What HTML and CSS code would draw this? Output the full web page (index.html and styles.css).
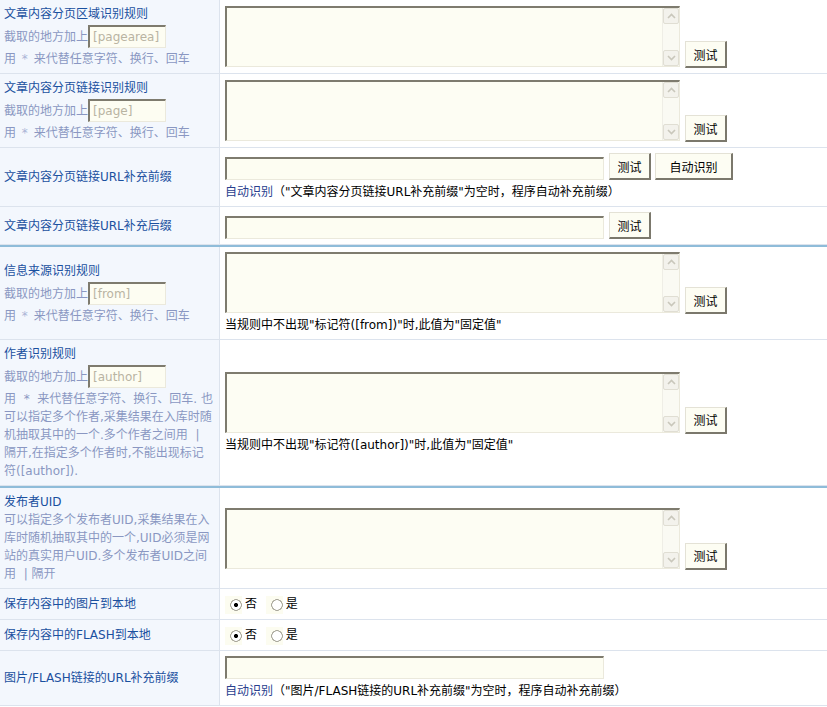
FILE: index.html
```html
<!DOCTYPE html>
<html>
<head>
<meta charset="utf-8">
<title>采集规则设置</title>
<link rel="stylesheet" href="styles.css">
</head>
<body>

<table class="form-table">
  <!-- 分页区域 -->
  <tr>
    <td class="label">
      <div class="title">文章内容分页区域识别规则</div>
      <div class="tip">截取的地方加上<input class="tag" value="[pagearea]" readonly></div>
      <div class="tip">用 <span class="star">*</span> 来代替任意字符、换行、回车</div>
    </td>
    <td class="field">
      <div class="area-row">
        <div class="area">
          <textarea></textarea>
          <div class="scroll">
            <span class="arrow"><svg width="9" height="6" viewBox="0 0 9 6"><path d="M1 5 L4.5 1.5 L8 5" fill="none" stroke="#c9c7bb" stroke-width="1.6"/></svg></span>
            <span class="arrow"><svg width="9" height="6" viewBox="0 0 9 6"><path d="M1 1 L4.5 4.5 L8 1" fill="none" stroke="#c9c7bb" stroke-width="1.6"/></svg></span>
          </div>
        </div>
        <button class="btn">测试</button>
      </div>
    </td>
  </tr>

  <!-- 分页链接 -->
  <tr>
    <td class="label">
      <div class="title">文章内容分页链接识别规则</div>
      <div class="tip">截取的地方加上<input class="tag" value="[page]" readonly></div>
      <div class="tip">用 <span class="star">*</span> 来代替任意字符、换行、回车</div>
    </td>
    <td class="field">
      <div class="area-row">
        <div class="area">
          <textarea></textarea>
          <div class="scroll">
            <span class="arrow"><svg width="9" height="6" viewBox="0 0 9 6"><path d="M1 5 L4.5 1.5 L8 5" fill="none" stroke="#c9c7bb" stroke-width="1.6"/></svg></span>
            <span class="arrow"><svg width="9" height="6" viewBox="0 0 9 6"><path d="M1 1 L4.5 4.5 L8 1" fill="none" stroke="#c9c7bb" stroke-width="1.6"/></svg></span>
          </div>
        </div>
        <button class="btn">测试</button>
      </div>
    </td>
  </tr>

  <!-- URL 前缀 -->
  <tr>
    <td class="label"><div class="title">文章内容分页链接URL补充前缀</div></td>
    <td class="field">
      <div class="input-row">
        <input class="text">
        <button class="btn">测试</button>
        <button class="btn btn-wide">自动识别</button>
      </div>
      <div class="note"><a class="link">自动识别</a>（"文章内容分页链接URL补充前缀"为空时，程序自动补充前缀）</div>
    </td>
  </tr>

  <!-- URL 后缀 -->
  <tr>
    <td class="label"><div class="title">文章内容分页链接URL补充后缀</div></td>
    <td class="field">
      <div class="input-row">
        <input class="text">
        <button class="btn">测试</button>
      </div>
    </td>
  </tr>

  <tr class="divider"><td colspan="2"></td></tr>

  <!-- 信息来源 -->
  <tr>
    <td class="label">
      <div class="title">信息来源识别规则</div>
      <div class="tip">截取的地方加上<input class="tag" value="[from]" readonly></div>
      <div class="tip">用 <span class="star">*</span> 来代替任意字符、换行、回车</div>
    </td>
    <td class="field">
      <div class="area-row">
        <div class="area">
          <textarea></textarea>
          <div class="scroll">
            <span class="arrow"><svg width="9" height="6" viewBox="0 0 9 6"><path d="M1 5 L4.5 1.5 L8 5" fill="none" stroke="#c9c7bb" stroke-width="1.6"/></svg></span>
            <span class="arrow"><svg width="9" height="6" viewBox="0 0 9 6"><path d="M1 1 L4.5 4.5 L8 1" fill="none" stroke="#c9c7bb" stroke-width="1.6"/></svg></span>
          </div>
        </div>
        <button class="btn">测试</button>
      </div>
      <div class="note">当规则中不出现"标记符([from])"时,此值为"固定值"</div>
    </td>
  </tr>

  <!-- 作者 -->
  <tr>
    <td class="label">
      <div class="title">作者识别规则</div>
      <div class="tip">截取的地方加上<input class="tag" value="[author]" readonly></div>
      <div class="tip">用 &nbsp;*&nbsp; 来代替任意字符、换行、回车. 也可以指定多个作者,采集结果在入库时随机抽取其中的一个.多个作者之间用 &nbsp;|&nbsp; 隔开,在指定多个作者时,不能出现标记符([author]).</div>
    </td>
    <td class="field">
      <div class="area-row">
        <div class="area">
          <textarea></textarea>
          <div class="scroll">
            <span class="arrow"><svg width="9" height="6" viewBox="0 0 9 6"><path d="M1 5 L4.5 1.5 L8 5" fill="none" stroke="#c9c7bb" stroke-width="1.6"/></svg></span>
            <span class="arrow"><svg width="9" height="6" viewBox="0 0 9 6"><path d="M1 1 L4.5 4.5 L8 1" fill="none" stroke="#c9c7bb" stroke-width="1.6"/></svg></span>
          </div>
        </div>
        <button class="btn">测试</button>
      </div>
      <div class="note">当规则中不出现"标记符([author])"时,此值为"固定值"</div>
    </td>
  </tr>

  <tr class="divider"><td colspan="2"></td></tr>

  <!-- 发布者 -->
  <tr>
    <td class="label">
      <div class="title">发布者UID</div>
      <div class="tip">可以指定多个发布者UID,采集结果在入库时随机抽取其中的一个,UID必须是网站的真实用户UID.多个发布者UID之间用 &nbsp;|&nbsp;隔开</div>
    </td>
    <td class="field">
      <div class="area-row">
        <div class="area">
          <textarea></textarea>
          <div class="scroll">
            <span class="arrow"><svg width="9" height="6" viewBox="0 0 9 6"><path d="M1 5 L4.5 1.5 L8 5" fill="none" stroke="#c9c7bb" stroke-width="1.6"/></svg></span>
            <span class="arrow"><svg width="9" height="6" viewBox="0 0 9 6"><path d="M1 1 L4.5 4.5 L8 1" fill="none" stroke="#c9c7bb" stroke-width="1.6"/></svg></span>
          </div>
        </div>
        <button class="btn">测试</button>
      </div>
    </td>
  </tr>

  <!-- 本地化 -->
  <tr>
    <td class="label"><div class="title">保存内容中的图片到本地</div></td>
    <td class="field">
      <label class="radio"><input type="radio" name="saveimg" checked>否</label>
      <label class="radio"><input type="radio" name="saveimg">是</label>
    </td>
  </tr>
  <tr>
    <td class="label"><div class="title">保存内容中的FLASH到本地</div></td>
    <td class="field">
      <label class="radio"><input type="radio" name="saveflash" checked>否</label>
      <label class="radio"><input type="radio" name="saveflash">是</label>
    </td>
  </tr>
  <tr>
    <td class="label"><div class="title">图片/FLASH链接的URL补充前缀</div></td>
    <td class="field">
      <div class="input-row">
        <input class="text">
      </div>
      <div class="note"><a class="link">自动识别</a>（"图片/FLASH链接的URL补充前缀"为空时，程序自动补充前缀）</div>
    </td>
  </tr>
</table>

</body>
</html>
```

FILE: styles.css
```css
/* Page base */
body {
  margin: 0;
  font: 12px/18px "DejaVu Sans", "Noto Sans CJK SC", sans-serif;
  color: #000;
  background: #fff;
}

/* Form table */
.form-table {
  width: 100%;
  border-collapse: collapse;
}

.form-table td {
  padding: 5px 4px;
  border-bottom: 1px solid #dce3ed;
  vertical-align: middle;
}

.form-table td.label {
  width: 211px;
  background: #f3f7fd;
  border-right: 1px solid #dce3ed;
}

.form-table td.field {
  padding-left: 5px;
}

.divider td {
  height: 2px;
  padding: 0 !important;
  font-size: 0;
  line-height: 0;
  background: #8fbcd9;
  border-bottom: 0 !important;
}

/* Left column text */
.title {
  color: #1a509f;
}

.tip {
  color: #8a97c2;
}

.star { color: #aab4d6; padding: 0 2px; }

/* Shared input look */
.tag, .text {
  box-sizing: border-box;
  height: 23px;
  margin: 0;
  padding: 0 3px;
  font: 12px "DejaVu Sans", "Noto Sans CJK SC", sans-serif;
  background: #fdfdf2;
  border-style: solid;
  border-width: 2px 1px 1px 2px;
  border-color: #7e7b6e #ebe9dc #ebe9dc #7e7b6e;
  outline: none;
}

.tag {
  width: 78px;
  margin: 2px 0;
  color: #b9b4a2;
}

.text {
  width: 379px;
}

/* Textarea with XP style scrollbar */
.area-row {
  display: flex;
  align-items: flex-end;
  gap: 5px;
}

.area-row .btn {
  margin-bottom: -1px;
}

.area {
  display: flex;
  box-sizing: border-box;
  width: 455px;
  height: 61px;
  background: #fdfdf3;
  border-style: solid;
  border-width: 2px 1px 1px 2px;
  border-color: #7e7b6e #ebe9dc #ebe9dc #7e7b6e;
}

.area textarea {
  flex: 1;
  margin: 0;
  padding: 2px;
  border: 0;
  resize: none;
  outline: none;
  background: transparent;
  font: 12px "DejaVu Sans", "Noto Sans CJK SC", sans-serif;
}

.scroll {
  display: flex;
  flex-direction: column;
  justify-content: space-between;
  width: 16px;
  background: #fafaf3;
  border-left: 1px solid #efeee6;
}

.arrow {
  display: flex;
  justify-content: center;
  align-items: center;
  box-sizing: border-box;
  height: 16px;
  background: #f3f2ec;
  border: 1px solid #e0ded3;
  border-radius: 2px;
}

/* Buttons */
.btn {
  box-sizing: border-box;
  width: 42px;
  height: 27px;
  margin: 0;
  padding: 0;
  font: 12px "DejaVu Sans", "Noto Sans CJK SC", sans-serif;
  color: #000;
  background: #fdfdf3;
  border-style: solid;
  border-width: 1px 2px 2px 1px;
  border-color: #e4e2d6 #7b786c #7b786c #e4e2d6;
  cursor: pointer;
}

.btn-wide {
  width: 78px;
}

.input-row {
  display: flex;
  align-items: flex-end;
  gap: 5px;
}

.input-row .btn-wide {
  margin-left: -1px;
}

.note {
  margin-top: 3px;
}

.link {
  color: #29408e;
  cursor: pointer;
}

/* Radios */
.radio {
  display: inline-flex;
  align-items: center;
  gap: 3px;
  height: 20px;
  margin-right: 5px;
  vertical-align: top;
}

.radio input {
  -webkit-appearance: none;
  appearance: none;
  width: 17px;
  height: 18px;
  margin: 2px 0 0;
  background:
    radial-gradient(circle at 11px 9px, #fff 0 4.5px, #aaa89c 5px 5.6px, transparent 6px),
    #fcfcf0;
}

.radio input:checked {
  background:
    radial-gradient(circle at 11px 9px, #000 0 1.8px, transparent 2.3px),
    radial-gradient(circle at 11px 9px, #fff 0 4.5px, #aaa89c 5px 5.6px, transparent 6px),
    #fcfcf0;
}
```
